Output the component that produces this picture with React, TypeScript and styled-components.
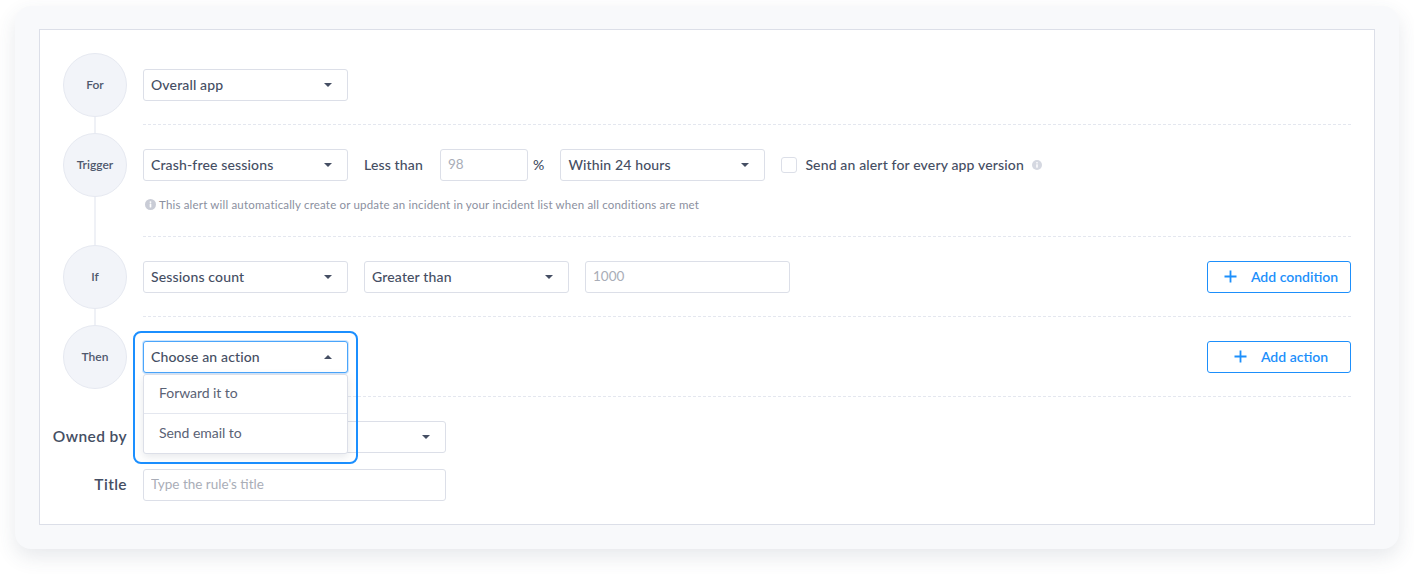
import React from "react";
import styled, { createGlobalStyle } from "styled-components";

const GlobalStyle = createGlobalStyle`
  html, body {
    margin: 0;
    background: #fff;
  }
  body {
    font-family: "Lato", "Open Sans", sans-serif;
    color: #454e63;
  }
`;

const Page = styled.div`
  width: 1414px;
  height: 574px;
  box-sizing: border-box;
  padding: 6px 15px 25px;
  overflow: hidden;
`;

const Card = styled.div`
  height: 100%;
  box-sizing: border-box;
  padding: 23px 24px 24px;
  background: #f8f9fb;
  border-radius: 16px;
  box-shadow: 0 8px 20px rgba(60, 70, 100, 0.12);
`;

const Panel = styled.div`
  height: 100%;
  box-sizing: border-box;
  padding: 23px;
  background: #fff;
  border: 1px solid #dcdfe8;
`;

const Step = styled.div`
  display: flex;
  gap: 16px;
`;

const Rail = styled.div`
  width: 64px;
  flex: none;
  display: flex;
  flex-direction: column;
  align-items: center;
`;

const Circle = styled.div`
  width: 64px;
  height: 64px;
  flex: none;
  box-sizing: border-box;
  display: flex;
  align-items: center;
  justify-content: center;
  padding-bottom: 1px;
  border-radius: 50%;
  background: #f2f4f9;
  border: 1px solid #e6e9f1;
  font-size: 12px;
  font-weight: 600;
  color: #4f586d;
`;

const Connector = styled.div`
  flex: 1;
  width: 2px;
  background: #eff1f6;
`;

const Content = styled.div`
  flex: 1;
  position: relative;
  padding: 16px 0 23px;
  margin-bottom: 8px;
  border-bottom: 1px dashed #e4e7ef;
`;

const Controls = styled.div`
  display: flex;
  align-items: center;
  height: 32px;
  gap: 16px;
`;

const SelectBox = styled.div<{ $open?: boolean; $width?: number }>`
  width: ${({ $width }) => $width ?? 205}px;
  height: 32px;
  flex: none;
  box-sizing: border-box;
  display: flex;
  align-items: center;
  padding: 0 15px 2px 7px;
  background: #fff;
  border: 1px solid ${({ $open }) => ($open ? "#4aa5fb" : "#dcdfe8")};
  border-radius: 3px;
  box-shadow: ${({ $open }) => ($open ? "0 0 0 1px #cfe6fd" : "none")};
  font-size: 14px;
  font-weight: 500;
  letter-spacing: 0.15px;
  color: #454e63;
`;

const Caret = styled.span<{ $up?: boolean }>`
  width: 0;
  height: 0;
  margin-left: auto;
  margin-top: 2px;
  border-left: 4.5px solid transparent;
  border-right: 4.5px solid transparent;
  border-top: ${({ $up }) => ($up ? "none" : "4px solid #454e63")};
  border-bottom: ${({ $up }) => ($up ? "4px solid #454e63" : "none")};
`;

const Field = styled.input<{ $width: number }>`
  width: ${({ $width }) => $width}px;
  height: 32px;
  flex: none;
  box-sizing: border-box;
  padding: 0 7px 2px;
  background: #fff;
  border: 1px solid #dcdfe8;
  border-radius: 3px;
  outline: none;
  font-family: inherit;
  font-size: 13.5px;
  &::placeholder {
    color: #a9adb7;
    opacity: 1;
  }
`;

const Label = styled.span`
  padding-bottom: 2px;
  font-size: 14px;
  font-weight: 500;
  letter-spacing: 0.15px;
  white-space: nowrap;
`;

const PercentGroup = styled.div`
  display: flex;
  align-items: center;
  gap: 5px;
  margin-left: 1px;
`;

const CheckGroup = styled.label`
  display: flex;
  align-items: center;
  gap: 8px;
`;

const CheckBox = styled.span`
  width: 16px;
  height: 16px;
  box-sizing: border-box;
  background: #fff;
  border: 1px solid #dcdfe8;
  border-radius: 3px;
`;

const Hint = styled.div`
  display: flex;
  align-items: center;
  gap: 3px;
  height: 15px;
  margin: 16px 0 1px 2px;
  font-size: 11.5px;
  letter-spacing: 0.185px;
  color: #8b90a0;
`;

const AddButton = styled.button`
  width: 144px;
  height: 32px;
  flex: none;
  margin-left: auto;
  display: flex;
  align-items: center;
  justify-content: center;
  gap: 14px;
  padding: 0 0 2px 4px;
  background: #fff;
  border: 1px solid #1d8ffb;
  border-radius: 3px;
  font-family: inherit;
  font-size: 14px;
  font-weight: 600;
  color: #1d8ffb;
`;

const Highlight = styled.div`
  position: absolute;
  z-index: 2;
  top: 6px;
  left: -10px;
  width: 225px;
  height: 133px;
  box-sizing: border-box;
  padding: 8px;
  border: 2px solid #1b8fff;
  border-radius: 8px;
`;

const Menu = styled.div`
  width: 205px;
  margin-top: 1px;
  box-sizing: border-box;
  background: #fff;
  border: 1px solid #dcdfe8;
  border-radius: 3px;
  box-shadow: 0 3px 8px rgba(60, 70, 100, 0.12);
`;

const MenuItem = styled.div`
  height: 38px;
  box-sizing: border-box;
  display: flex;
  align-items: center;
  padding: 0 0 3px 15px;
  font-size: 14px;
  letter-spacing: -0.05px;
  color: #5a6275;
  & + & {
    height: 40px;
    padding-bottom: 2px;
    border-top: 1px solid #e4e7ef;
  }
`;

const MetaForm = styled.div`
  display: grid;
  grid-template-columns: 64px 303px;
  column-gap: 16px;
  row-gap: 16px;
  margin-top: 16px;
  align-items: center;
`;

const MetaLabel = styled.div`
  justify-self: end;
  white-space: nowrap;
  padding-bottom: 3px;
  font-size: 15.5px;
  font-weight: 600;
  letter-spacing: 0.4px;
  color: #454e63;
`;

const InfoIcon: React.FC<{ size: number; color: string }> = ({ size, color }) => (
  <svg width={size} height={size} viewBox="0 0 12 12">
    <circle cx="6" cy="6" r="6" fill={color} />
    <rect x="5.1" y="5" width="1.8" height="4.2" rx="0.4" fill="#fff" />
    <circle cx="6" cy="3.4" r="1" fill="#fff" />
  </svg>
);

const PlusIcon = () => (
  <svg width="13" height="13" viewBox="0 0 13 13">
    <path d="M6.5 0.5v12M0.5 6.5h12" stroke="#1d8ffb" strokeWidth="1.8" fill="none" />
  </svg>
);

const Select: React.FC<{ value?: string; width?: number; open?: boolean }> = ({ value, width, open }) => (
  <SelectBox $width={width} $open={open}>
    {value}
    <Caret $up={open} />
  </SelectBox>
);

export default function App() {
  return (
    <Page>
      <GlobalStyle />
      <Card>
        <Panel>
          <Step>
            <Rail>
              <Circle>For</Circle>
              <Connector />
            </Rail>
            <Content>
              <Controls>
                <Select value="Overall app" />
              </Controls>
            </Content>
          </Step>

          <Step>
            <Rail>
              <Circle>Trigger</Circle>
              <Connector />
            </Rail>
            <Content>
              <Controls>
                <Select value="Crash-free sessions" />
                <Label>Less than</Label>
                <PercentGroup>
                  <Field $width={88} placeholder="98" />
                  <Label>%</Label>
                </PercentGroup>
                <Select value="Within 24 hours" />
                <CheckGroup>
                  <CheckBox />
                  <Label>Send an alert for every app version</Label>
                  <InfoIcon size={10} color="#d5d8e1" />
                </CheckGroup>
              </Controls>
              <Hint>
                <InfoIcon size={11} color="#c9ccd6" />
                This alert will automatically create or update an incident in your incident list when all conditions are met
              </Hint>
            </Content>
          </Step>

          <Step>
            <Rail>
              <Circle>If</Circle>
              <Connector />
            </Rail>
            <Content>
              <Controls>
                <Select value="Sessions count" />
                <Select value="Greater than" />
                <Field $width={205} placeholder="1000" />
                <AddButton>
                  <PlusIcon />
                  Add condition
                </AddButton>
              </Controls>
            </Content>
          </Step>

          <Step>
            <Rail>
              <Circle>Then</Circle>
            </Rail>
            <Content>
              <Controls>
                <AddButton>
                  <PlusIcon />
                  Add action
                </AddButton>
              </Controls>
              <Highlight>
                <Select value="Choose an action" open />
                <Menu>
                  <MenuItem>Forward it to</MenuItem>
                  <MenuItem>Send email to</MenuItem>
                </Menu>
              </Highlight>
            </Content>
          </Step>

          <MetaForm>
            <MetaLabel>Owned by</MetaLabel>
            <Select width={303} />
            <MetaLabel>Title</MetaLabel>
            <Field $width={303} placeholder="Type the rule's title" />
          </MetaForm>
        </Panel>
      </Card>
    </Page>
  );
}
